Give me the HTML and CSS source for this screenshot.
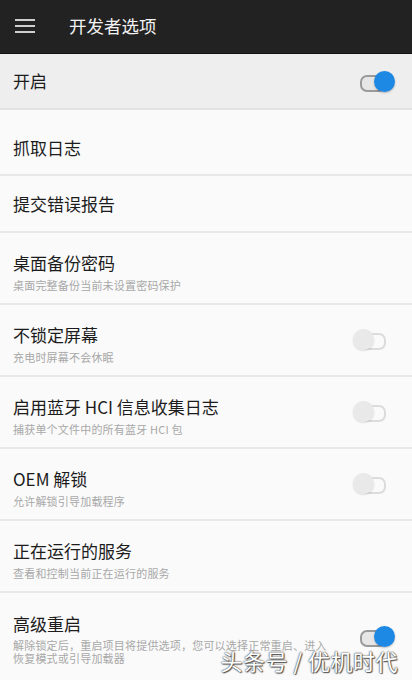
FILE: index.html
```html
<!DOCTYPE html>
<html lang="zh-CN">
<head>
<meta charset="utf-8">
<link rel="stylesheet" href="styles.css">
</head>
<body>
<div class="screen">
  <header class="bar">
    <svg class="menu" width="20" height="16" viewBox="0 0 20 16"><rect x="0" y="1" width="20" height="2" fill="#cfcfcf"/><rect x="0" y="7" width="20" height="2" fill="#cfcfcf"/><rect x="0" y="13" width="20" height="2" fill="#cfcfcf"/></svg>
    <span class="bar-title">开发者选项</span>
  </header>
  <div class="master">
    <span class="title">开启</span>
    <span class="toggle on"><span class="thumb"></span></span>
  </div>
  <div class="row first"><div class="txt"><div class="title">抓取日志</div></div></div>
  <div class="row single"><div class="txt"><div class="title">提交错误报告</div></div></div>
  <div class="row"><div class="txt"><div class="title">桌面备份密码</div><div class="sub">桌面完整备份当前未设置密码保护</div></div></div>
  <div class="row"><div class="txt"><div class="title">不锁定屏幕</div><div class="sub">充电时屏幕不会休眠</div></div><span class="toggle off"><span class="thumb"></span></span></div>
  <div class="row"><div class="txt"><div class="title">启用蓝牙 HCI 信息收集日志</div><div class="sub">捕获单个文件中的所有蓝牙 HCI 包</div></div><span class="toggle off"><span class="thumb"></span></span></div>
  <div class="row"><div class="txt"><div class="title">OEM 解锁</div><div class="sub">允许解锁引导加载程序</div></div><span class="toggle off"><span class="thumb"></span></span></div>
  <div class="row"><div class="txt"><div class="title">正在运行的服务</div><div class="sub">查看和控制当前正在运行的服务</div></div></div>
  <div class="row last"><div class="txt"><div class="title">高级重启</div><div class="sub">解除锁定后，重启项目将提供选项，您可以选择正常重启、进入恢复模式或引导加载器</div></div><span class="toggle on"><span class="thumb"></span></span></div>
  <div class="watermark">头条号 / 优机时代</div>
</div>
</body>
</html>
```
FILE: styles.css
```css
* { box-sizing: border-box; }
html, body { margin: 0; padding: 0; }
body {
  font-family: "Noto Sans CJK SC", "Noto Sans", sans-serif;
  background: #fafafa;
  width: 412px;
  height: 680px;
  overflow: hidden;
}
.screen {
  position: relative;
  width: 412px;
  height: 680px;
  overflow: hidden;
  background: #fafafa;
}
.bar {
  height: 54px;
  background: #222222;
  display: flex;
  align-items: center;
  padding-left: 15px;
  border-bottom: 1px solid #111;
}
.menu { display: block; margin-top: -2px; }
.bar-title {
  color: #f2f2f2;
  font-size: 17.5px;
  line-height: 20px;
  margin-left: 34px;
  margin-top: -2px;
}
.master {
  height: 56px;
  background: #eeeeee;
  border-bottom: 2px solid #e2e2e2;
  display: flex;
  align-items: center;
  justify-content: space-between;
  padding: 0 17px 0 13px;
}
.title {
  font-size: 17px;
  line-height: 20px;
  color: #1c1c1c;
}
.sub {
  font-size: 11px;
  line-height: 13px;
  color: #a8a8a8;
  margin-top: 6px;
  letter-spacing: 0.2px;
}
.row {
  height: 72px;
  display: flex;
  align-items: flex-start;
  justify-content: space-between;
  padding: 20px 17px 0 13px;
  border-bottom: 2px solid #e8e8e8;
}
.row.first { height: 66px; padding-top: 28px; }
.row.single { height: 57px; padding-top: 18px; }
.row.last { height: 90px; border-bottom: none; padding-top: 21px; }
.last .sub { width: 322px; margin-top: 5px; }
.txt { flex: 1; min-width: 0; }
.toggle {
  position: relative;
  width: 42px;
  height: 21px;
  flex: none;
  display: block;
}
.row .toggle { align-self: center; margin-top: -21px; }
.row.last .toggle { margin-top: -24px; }
.toggle::before {
  content: "";
  position: absolute;
  left: 7px;
  right: 9px;
  top: 4px;
  height: 13px;
  border-radius: 7px;
  border: 2px solid #9a9a9a;
  background: #e6e6e6;
}
.toggle.off::before {
  border-color: #dcdcdc;
  background: #fafafa;
}
.thumb {
  position: absolute;
  top: 0;
  width: 21px;
  height: 21px;
  border-radius: 50%;
}
.on .thumb {
  right: 0;
  background: #1e88e5;
  box-shadow: 0 1px 2px rgba(0,0,0,0.25);
}
.off .thumb {
  left: 0;
  background: #e9e9e9;
  box-shadow: 0 1px 2px rgba(0,0,0,0.12);
}
.watermark {
  position: absolute;
  right: 14px;
  bottom: 7px;
  font-size: 22px;
  line-height: 26px;
  color: #ffffff;
  letter-spacing: 0.5px;
  text-shadow: 0 0 1px #555, 0 0 2px #444, 1px 1px 1px #555;
}
```
